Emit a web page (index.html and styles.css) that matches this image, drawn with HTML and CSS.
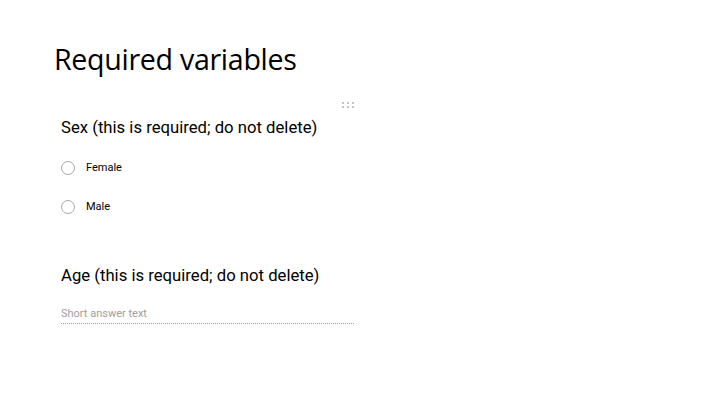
FILE: index.html
```html
<!DOCTYPE html>
<html>
<head>
<meta charset="utf-8">
<link rel="stylesheet" href="styles.css">
</head>
<body>
<main class="slide">
  <h1 class="title">Required variables</h1>
  <section class="form">
    <div class="handle" aria-hidden="true">
      <span></span><span></span><span></span><span></span><span></span><span></span>
    </div>
    <div class="question">
      <h2 class="q-title">Sex (this is required; do not delete)</h2>
      <ul class="options">
        <li class="option"><span class="radio"></span><span class="label">Female</span></li>
        <li class="option"><span class="radio"></span><span class="label">Male</span></li>
      </ul>
    </div>
    <div class="question age">
      <h2 class="q-title">Age (this is required; do not delete)</h2>
      <div class="short">Short answer text</div>
    </div>
  </section>
</main>
</body>
</html>
```
FILE: styles.css
```css
html, body {
  margin: 0;
  padding: 0;
  background: #ffffff;
}
.slide {
  width: 720px;
  height: 405px;
  box-sizing: border-box;
  padding: 40px 0 0 54px;
  overflow: hidden;
}
.title {
  margin: 0;
  font-family: "Open Sans", sans-serif;
  font-weight: 400;
  font-size: 28.6px;
  line-height: 38px;
  color: #000;
  letter-spacing: -0.3px;
}
.form {
  width: 300px;
  margin-left: 7px;
  margin-top: 24px;
  display: flex;
  flex-direction: column;
}
.handle {
  align-self: flex-end;
  margin-right: 7px;
  display: grid;
  grid-template-columns: repeat(3, 2px);
  grid-auto-rows: 2px;
  gap: 2px 3px;
}
.handle span {
  background: #c4c4c4;
}
.q-title {
  margin: 0;
  font-family: Roboto, sans-serif;
  font-weight: 400;
  font-size: 16.7px;
  line-height: 20px;
  color: #000;
}
.question {
  margin-top: 10px;
}
.options {
  list-style: none;
  margin: 22px 0 0;
  padding: 0;
  display: flex;
  flex-direction: column;
  gap: 24px;
}
.option {
  display: flex;
  align-items: center;
  height: 15px;
}
.radio {
  width: 12px;
  height: 12px;
  border: 1.5px solid #a8a8a8;
  border-radius: 50%;
  margin-right: 11px;
}
.label {
  font-family: Roboto, sans-serif;
  font-size: 11px;
  color: #000;
}
.age {
  margin-top: 52px;
}
.short {
  margin-top: 21px;
  width: 293px;
  font-family: Roboto, sans-serif;
  font-size: 11px;
  line-height: 14px;
  color: #9e9e9e;
  padding-bottom: 2px;
  border-bottom: 1px dotted #9e9e9e;
}
```
